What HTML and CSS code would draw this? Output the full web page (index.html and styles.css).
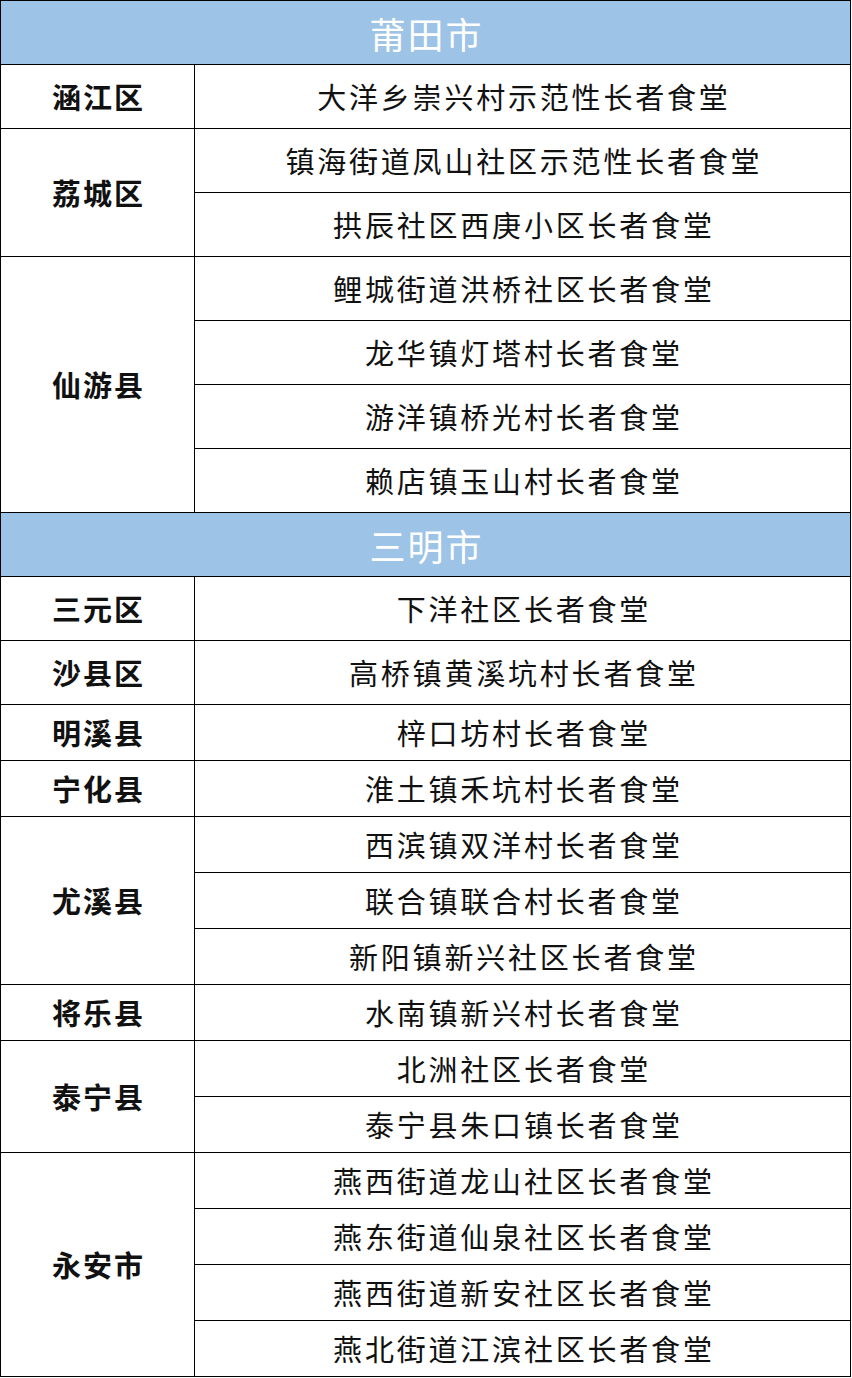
FILE: index.html
```html
<!DOCTYPE html>
<html lang="zh-CN">
<head>
<meta charset="utf-8">
<title>长者食堂</title>
<link rel="stylesheet" href="styles.css">
</head>
<body>
<table class="sheet">
  <colgroup><col class="col-area"><col class="col-name"></colgroup>
  <tbody>
    <tr class="r64"><td class="city" colspan="2">莆田市</td></tr>
    <tr class="r64"><td class="area">涵江区</td><td class="name">大洋乡崇兴村示范性长者食堂</td></tr>
    <tr class="r64"><td class="area" rowspan="2">荔城区</td><td class="name">镇海街道凤山社区示范性长者食堂</td></tr>
    <tr class="r64"><td class="name">拱辰社区西庚小区长者食堂</td></tr>
    <tr class="r64"><td class="area" rowspan="4">仙游县</td><td class="name">鲤城街道洪桥社区长者食堂</td></tr>
    <tr class="r64"><td class="name">龙华镇灯塔村长者食堂</td></tr>
    <tr class="r64"><td class="name">游洋镇桥光村长者食堂</td></tr>
    <tr class="r64"><td class="name">赖店镇玉山村长者食堂</td></tr>
    <tr class="r64"><td class="city" colspan="2">三明市</td></tr>
    <tr class="r64"><td class="area">三元区</td><td class="name">下洋社区长者食堂</td></tr>
    <tr class="r64"><td class="area">沙县区</td><td class="name">高桥镇黄溪坑村长者食堂</td></tr>
    <tr class="r56"><td class="area">明溪县</td><td class="name">梓口坊村长者食堂</td></tr>
    <tr class="r56"><td class="area">宁化县</td><td class="name">淮土镇禾坑村长者食堂</td></tr>
    <tr class="r56"><td class="area" rowspan="3">尤溪县</td><td class="name">西滨镇双洋村长者食堂</td></tr>
    <tr class="r56"><td class="name">联合镇联合村长者食堂</td></tr>
    <tr class="r56"><td class="name">新阳镇新兴社区长者食堂</td></tr>
    <tr class="r56"><td class="area">将乐县</td><td class="name">水南镇新兴村长者食堂</td></tr>
    <tr class="r56"><td class="area" rowspan="2">泰宁县</td><td class="name">北洲社区长者食堂</td></tr>
    <tr class="r56"><td class="name">泰宁县朱口镇长者食堂</td></tr>
    <tr class="r56"><td class="area" rowspan="4">永安市</td><td class="name">燕西街道龙山社区长者食堂</td></tr>
    <tr class="r56"><td class="name">燕东街道仙泉社区长者食堂</td></tr>
    <tr class="r56"><td class="name">燕西街道新安社区长者食堂</td></tr>
    <tr class="r56"><td class="name">燕北街道江滨社区长者食堂</td></tr>
  </tbody>
</table>
</body>
</html>
```

FILE: styles.css
```css
html, body {
  margin: 0;
  padding: 0;
  background: #ffffff;
}
.sheet {
  width: 851px;
  border-collapse: collapse;
  table-layout: fixed;
  font-family: "Noto Sans CJK SC", "Noto Sans", sans-serif;
  color: #111111;
}
.col-area { width: 194px; }
.col-name { width: auto; }
.sheet td {
  border: 1px solid #000000;
  padding: 0;
  text-align: center;
  vertical-align: middle;
  line-height: 1;
  white-space: nowrap;
}
.r64 td { height: 63px; }
.r56 td { height: 55px; }
.city {
  background: #9dc3e6;
  color: #ffffff;
  font-size: 36px;
  letter-spacing: 2px;
  text-indent: 2px;
}
.area {
  font-size: 29px;
  font-weight: 700;
  letter-spacing: 2px;
  text-indent: 2px;
}
.name {
  font-size: 29px;
  font-weight: 400;
  letter-spacing: 2.8px;
  text-indent: 2.8px;
}
```
